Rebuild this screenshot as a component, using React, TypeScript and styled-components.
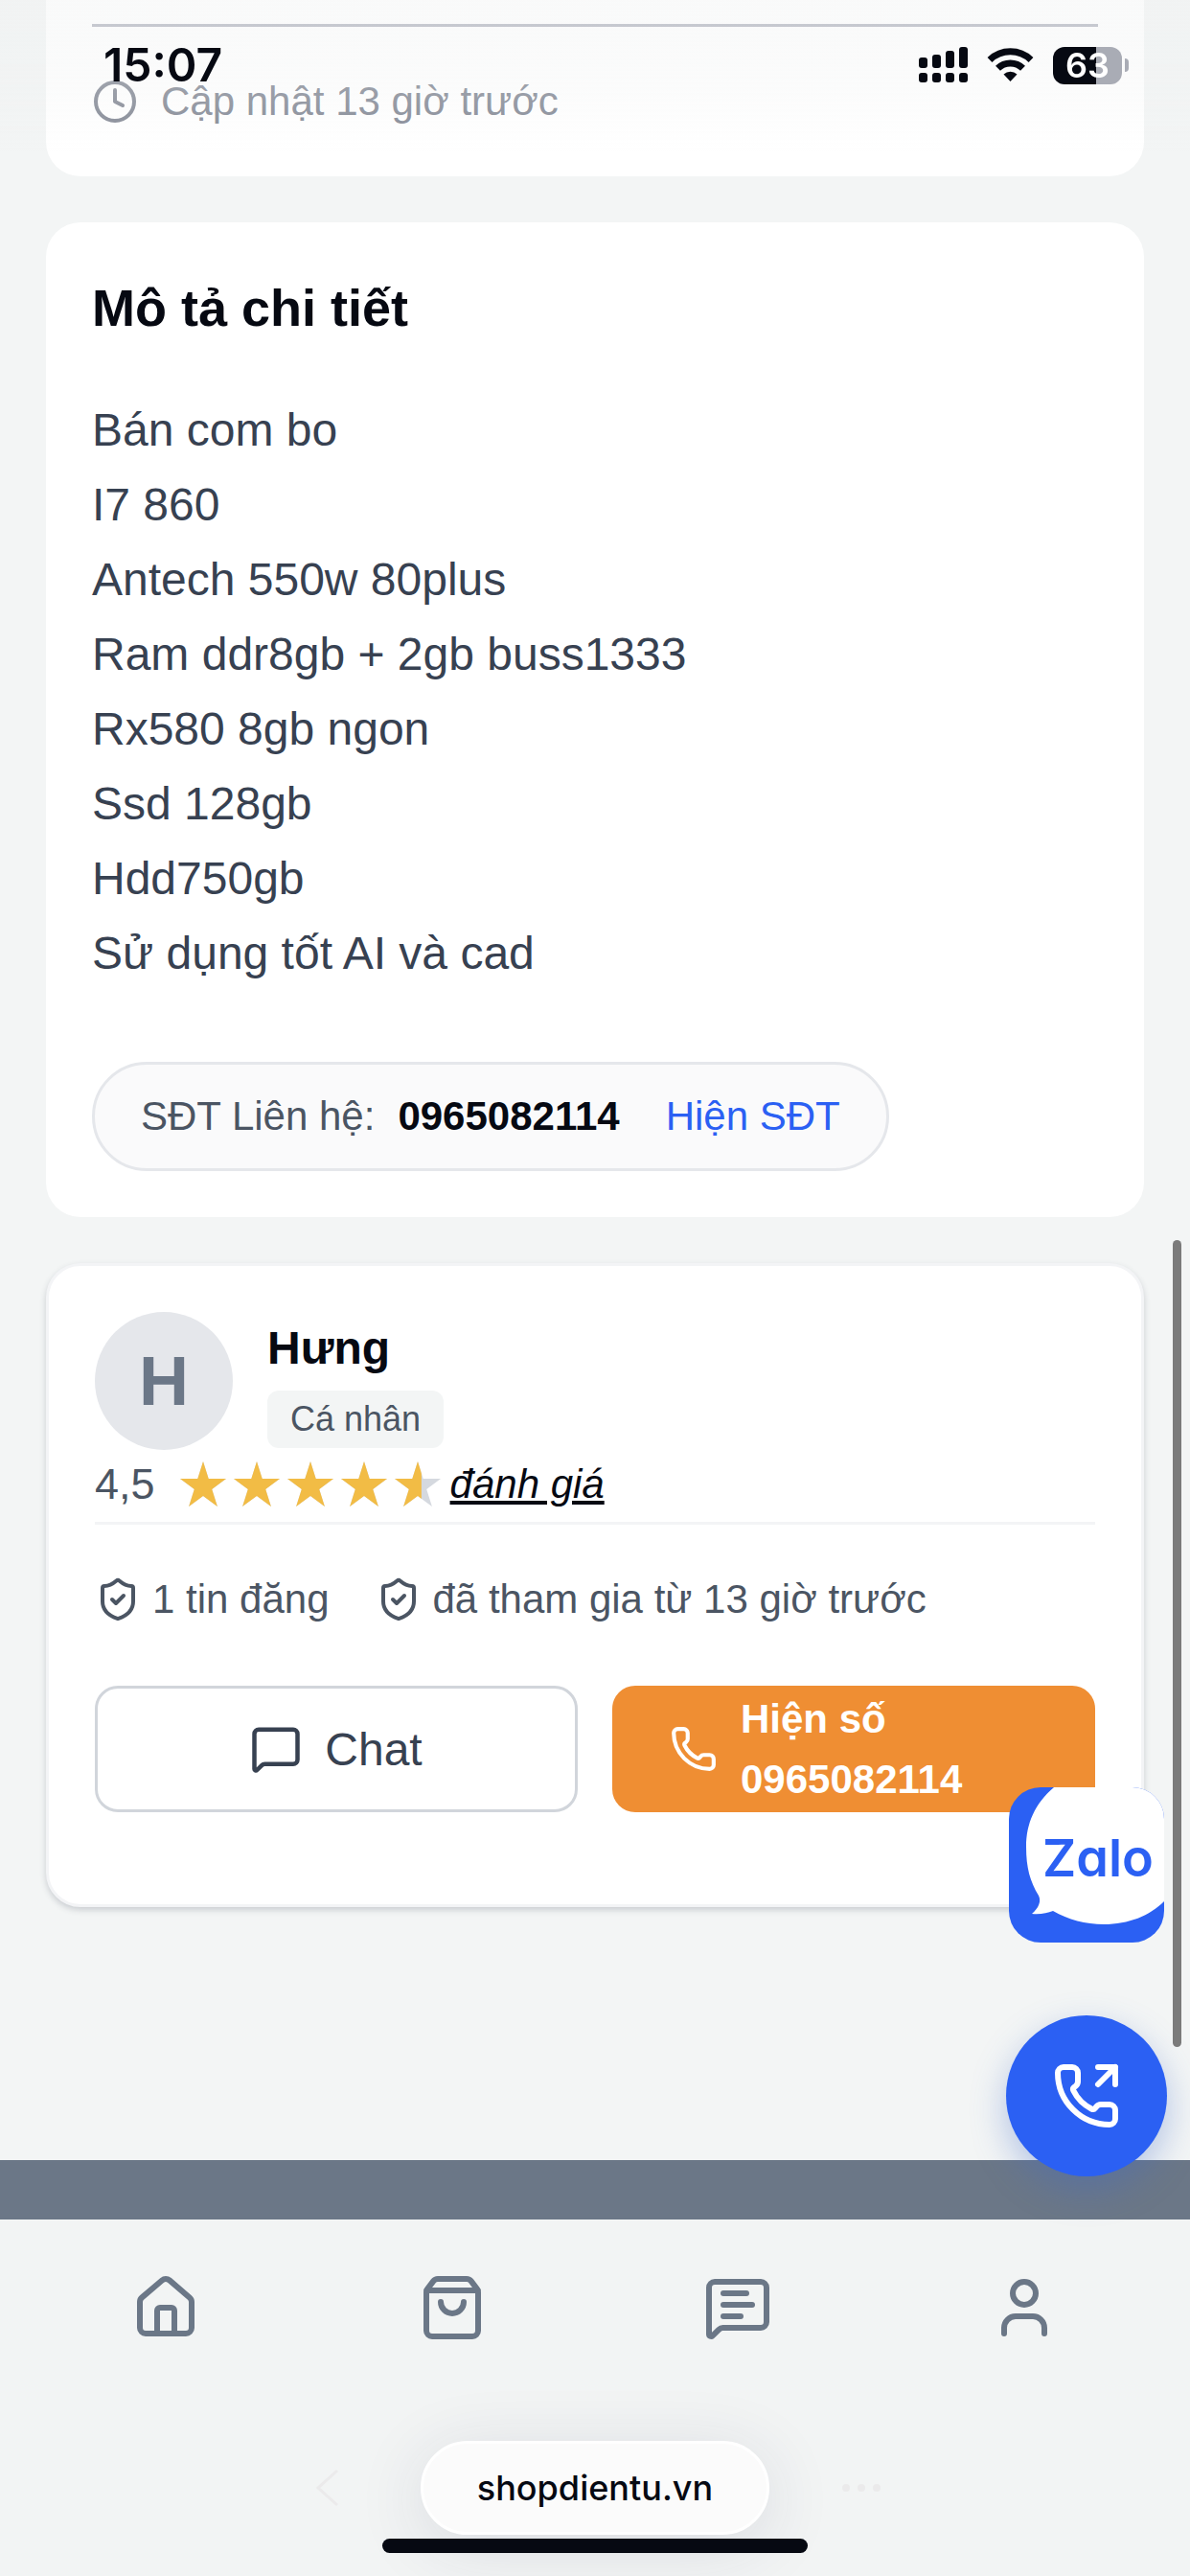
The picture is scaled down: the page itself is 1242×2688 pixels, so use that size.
import React from "react";
import styled, { createGlobalStyle } from "styled-components";
import {
  Clock,
  House,
  MessageSquare,
  MessageSquareText,
  Phone,
  PhoneOutgoing,
  ShieldCheck,
  ShoppingBag,
  User,
} from "lucide-react";

const sans = '"Liberation Sans", Arial, sans-serif';
const system = 'Inter, "Liberation Sans", sans-serif';

const color = {
  ink: "#060912",
  slate: "#374151",
  muted: "#4b5563",
  icon: "#6b7787",
  page: "#f3f5f5",
  line: "#e5e7eb",
  blue: "#2b60f3",
  orange: "#ef8e33",
  star: "#f2bc45",
};

const GlobalStyle = createGlobalStyle`
  *, *::before, *::after { box-sizing: border-box; }
  body { margin: 0; background: ${color.page}; font-family: ${sans}; color: ${color.ink}; }
  h1, h2, p { margin: 0; }
  button { font: inherit; padding: 0; border: 0; background: none; cursor: pointer; }
  a { color: inherit; }
  svg { display: block; flex: none; }
`;

const Page = styled.div`
  min-height: 100vh;
  display: flex;
  flex-direction: column;
`;

const Content = styled.main`
  flex: 1;
  display: flex;
  flex-direction: column;
  gap: 48px;
  padding: 0 48px;
`;

const Card = styled.section`
  background: #fff;
  border-radius: 36px;
  padding: 48px;
`;

const SummaryCard = styled(Card)`
  padding-top: 25px;
  border-radius: 0 0 36px 36px;
`;

const SellerCard = styled(Card)`
  border: 3px solid #f3f4f6;
  padding-bottom: 96px;
  box-shadow: 0 3px 6px rgba(55, 65, 81, 0.22);
`;

const Updated = styled.div`
  display: flex;
  align-items: center;
  gap: 24px;
  padding-top: 48px;
  border-top: 3px solid #b3b7c0;
  font-size: 42px;
  line-height: 60px;
  color: #858a96;
`;

const Title = styled.h1`
  margin-bottom: 48px;
  font-size: 54px;
  line-height: 82px;
`;

const Description = styled.p`
  margin-bottom: 74px;
  font-size: 48px;
  line-height: 78px;
  color: ${color.slate};
  white-space: pre-line;
`;

const PhonePill = styled.div`
  display: inline-flex;
  align-items: center;
  gap: 24px;
  height: 114px;
  padding: 0 48px;
  border: 3px solid ${color.line};
  border-radius: 57px;
  background: #fafafb;
  font-size: 42px;
  line-height: 60px;
  color: ${color.muted};
  vertical-align: top;

  strong { color: ${color.ink}; }
`;

const RevealButton = styled.button`
  margin-left: 24px;
  color: ${color.blue};
`;

const SellerHead = styled.div`
  display: flex;
  align-items: center;
  gap: 36px;
`;

const Avatar = styled.div`
  display: grid;
  place-items: center;
  width: 144px;
  height: 144px;
  border-radius: 50%;
  background: ${color.line};
  color: ${color.icon};
  font-size: 72px;
  font-weight: 700;
`;

const SellerInfo = styled.div`
  display: flex;
  flex-direction: column;
  align-items: flex-start;
  gap: 8px;
`;

const SellerName = styled.h2`
  font-size: 48px;
  line-height: 72px;
`;

const Chip = styled.span`
  padding: 0 24px;
  border-radius: 12px;
  background: ${color.page};
  font-size: 36px;
  line-height: 60px;
  color: ${color.muted};
`;

const Rating = styled.div`
  display: flex;
  align-items: center;
  gap: 8px;
  padding-bottom: 3px;
  border-bottom: 3px solid #f3f4f6;
  line-height: 72px;
`;

const Score = styled.span`
  margin-right: 18px;
  font-size: 45px;
  color: ${color.muted};
`;

const ReviewLink = styled.a`
  margin-left: 2px;
  font-size: 42px;
  font-style: italic;
`;

const Stats = styled.div`
  display: flex;
  gap: 48px;
  padding: 48px 0 60px;
`;

const Stat = styled.div`
  display: flex;
  align-items: center;
  gap: 12px;
  font-size: 42px;
  line-height: 60px;
  color: ${color.muted};
`;

const Actions = styled.div`
  display: grid;
  grid-template-columns: 1fr 1fr;
  gap: 36px;
`;

const ActionButton = styled.button<{ $primary?: boolean }>`
  && {
    display: flex;
    align-items: center;
    justify-content: ${(p) => (p.$primary ? "flex-start" : "center")};
    gap: 24px;
    height: 132px;
    padding: 0 ${(p) => (p.$primary ? "60px" : "24px")};
    border: ${(p) => (p.$primary ? "0" : "3px solid #d1d5db")};
    border-radius: 24px;
    background: ${(p) => (p.$primary ? color.orange : "#fff")};
    color: ${(p) => (p.$primary ? "#fff" : color.slate)};
    font-size: ${(p) => (p.$primary ? "42px" : "48px")};
    font-weight: ${(p) => (p.$primary ? 700 : 400)};
    line-height: 63px;
    text-align: left;
  }
`;

const FooterBand = styled.footer`
  height: 62px;
  background: ${color.icon};
`;

const BottomArea = styled.div`
  display: flex;
  flex-direction: column;
  align-items: center;
  padding-bottom: 24px;
  background: #f2f4f4;
  overflow: hidden;
`;

const NavBar = styled.nav`
  align-self: stretch;
  display: grid;
  grid-template-columns: repeat(4, 1fr);
  justify-items: center;
  padding: 56px 24px 103px;
`;

const NavLink = styled.a`
  color: ${color.icon};
`;

const BrowserBar = styled.div`
  display: flex;
  align-items: center;
  gap: 72px;
  margin-bottom: 4px;
  color: #ebeaeb;
`;

const AddressButton = styled.button`
  && {
    height: 98px;
    padding: 0 56px;
    border: 3px solid #fff;
    border-radius: 49px;
    background: #fbfbfb;
    box-shadow: 0 12px 72px rgba(40, 40, 80, 0.12);
    color: ${color.ink};
    font-family: ${system};
    font-size: 36px;
    font-weight: 500;
  }
`;

const HomeIndicator = styled.div`
  position: relative;
  width: 444px;
  height: 15px;
  border-radius: 8px;
  background: ${color.ink};
`;

const StatusBar = styled.header`
  position: fixed;
  inset: 0 0 auto 0;
  display: flex;
  justify-content: space-between;
  align-items: flex-start;
  height: 160px;
  padding: 38px 64px 0 108px;
  background: linear-gradient(rgba(238, 240, 240, 0.34) 0, rgba(238, 240, 240, 0.26) 50%, rgba(255, 255, 255, 0) 100%);
  font-family: ${system};
  pointer-events: none;
`;

const Time = styled.span`
  font-size: 48px;
  font-weight: 600;
  line-height: 60px;
`;

const StatusIcons = styled.div`
  display: flex;
  align-items: center;
  gap: 20px;
  height: 60px;
`;

const Battery = styled.div`
  display: flex;
  align-items: center;
  gap: 3px;
`;

const BatteryBody = styled.div`
  width: 72px;
  height: 39px;
  border-radius: 12px;
  background: linear-gradient(90deg, ${color.ink} 63%, #a9acb5 63%);
  color: #fff;
  font-size: 36px;
  font-weight: 600;
  line-height: 39px;
  text-align: center;
`;

const BatteryNub = styled.div`
  width: 4px;
  height: 14px;
  border-radius: 0 4px 4px 0;
  background: #a9acb5;
`;

const Floating = styled.aside`
  position: fixed;
  right: 24px;
  bottom: 417px;
  display: flex;
  flex-direction: column;
  align-items: center;
  gap: 76px;
`;

const ZaloLink = styled.a`
  display: block;
  width: 162px;
  height: 162px;
  border-radius: 33px;
  overflow: hidden;
`;

const ZaloWord = styled.text`
  font-family: ${system};
  font-size: 54px;
  font-weight: 600;
  font-feature-settings: "cv11", "ss03";
  fill: ${color.blue};
`;

const CallButton = styled.button`
  && {
    display: grid;
    place-items: center;
    width: 168px;
    height: 168px;
    border-radius: 50%;
    background: ${color.blue};
    color: #fff;
    box-shadow: 0 14px 36px rgba(60, 105, 200, 0.36);
  }
`;

const ScrollThumb = styled.div`
  position: fixed;
  top: 1294px;
  right: 9px;
  width: 9px;
  height: 842px;
  border-radius: 5px;
  background: #7b7b7b;
`;

const starPath =
  "M24 0 L29.7 18 H48 L33.2 29 L38.9 47 L24 36 L9.1 47 L14.8 29 L0 18 H18.3 Z";

function Star({ fill }: { fill: number }) {
  const id = `star-${Math.round(fill * 100)}`;
  return (
    <svg width="48" height="48" viewBox="0 0 48 48" aria-hidden="true">
      <clipPath id={id}>
        <rect width={48 * fill} height="48" />
      </clipPath>
      <path d={starPath} fill="#d5d9df" />
      <path d={starPath} fill={color.star} clipPath={`url(#${id})`} />
    </svg>
  );
}

function SignalIcon() {
  const tops = [11, 8, 4, 0];
  return (
    <svg width="51" height="38" viewBox="0 0 51 38" fill={color.ink} aria-hidden="true">
      {tops.map((top, i) => (
        <React.Fragment key={top}>
          <rect x={i * 14} y={top} width="9" height={22 - top} rx="3" />
          <rect x={i * 14} y="27" width="9" height="10" rx="3" />
        </React.Fragment>
      ))}
    </svg>
  );
}

function WifiIcon() {
  return (
    <svg width="49" height="38" viewBox="0 0 49 38" aria-hidden="true">
      <g fill="none" stroke={color.ink} strokeWidth="7">
        <path d="M3 13.5 A31 31 0 0 1 46 13.5" />
        <path d="M11.5 22.3 A18.5 18.5 0 0 1 37.5 22.3" />
      </g>
      <path d="M17.5 28.5 A10.5 10.5 0 0 1 31.5 28.5 L24.5 36 Z" fill={color.ink} />
    </svg>
  );
}

function ZaloLogo() {
  return (
    <svg width="162" height="162" viewBox="0 0 162 162" aria-hidden="true">
      <rect width="162" height="162" fill={color.blue} />
      <path
        d="M47 0 C27 17 18 38 18 62 C18 84 22 98 31 113 C34 119 31 126 24 132 C33 133 40 131 46 129 C62 138 80 143 99 143 C125 143 147 134 162 119 V0 Z"
        fill="#fff"
      />
      <ZaloWord x="35" y="93">Zalo</ZaloWord>
    </svg>
  );
}

const description = [
  "Bán com bo",
  "I7 860",
  "Antech 550w 80plus",
  "Ram ddr8gb + 2gb buss1333",
  "Rx580 8gb ngon",
  "Ssd 128gb",
  "Hdd750gb",
  "Sử dụng tốt AI và cad",
].join("\n");

const stars = [1, 1, 1, 1, 0.58];
const stats = ["1 tin đăng", "đã tham gia từ 13 giờ trước"];
const navItems = [
  { label: "Trang chủ", Icon: House },
  { label: "Mua sắm", Icon: ShoppingBag },
  { label: "Tin nhắn", Icon: MessageSquareText },
  { label: "Tài khoản", Icon: User },
];

export default function App() {
  return (
    <>
      <GlobalStyle />
      <Page>
        <Content>
          <SummaryCard>
            <Updated>
              <Clock size={48} />
              <span>Cập nhật 13 giờ trước</span>
            </Updated>
          </SummaryCard>

          <Card>
            <Title>Mô tả chi tiết</Title>
            <Description>{description}</Description>
            <PhonePill>
              <span>SĐT Liên hệ:</span>
              <strong>0965082114</strong>
              <RevealButton type="button">Hiện SĐT</RevealButton>
            </PhonePill>
          </Card>

          <SellerCard>
            <SellerHead>
              <Avatar>H</Avatar>
              <SellerInfo>
                <SellerName>Hưng</SellerName>
                <Chip>Cá nhân</Chip>
              </SellerInfo>
            </SellerHead>
            <Rating>
              <Score>4,5</Score>
              {stars.map((fill, i) => (
                <Star key={i} fill={fill} />
              ))}
              <ReviewLink href="#reviews">đánh giá</ReviewLink>
            </Rating>
            <Stats>
              {stats.map((text) => (
                <Stat key={text}>
                  <ShieldCheck size={48} />
                  <span>{text}</span>
                </Stat>
              ))}
            </Stats>
            <Actions>
              <ActionButton type="button">
                <MessageSquare size={54} />
                <span>Chat</span>
              </ActionButton>
              <ActionButton type="button" $primary>
                <Phone size={50} />
                <span>Hiện số 0965082114</span>
              </ActionButton>
            </Actions>
          </SellerCard>
        </Content>

        <FooterBand />
        <BottomArea>
          <NavBar>
            {navItems.map(({ label, Icon }) => (
              <NavLink key={label} href="#" aria-label={label}>
                <Icon size={72} />
              </NavLink>
            ))}
          </NavBar>
          <BrowserBar>
            <svg width="48" height="48" viewBox="0 0 48 48" fill="none" stroke="currentColor" strokeWidth="3" aria-hidden="true">
              <path d="M33 6 L13 24 L33 42" />
            </svg>
            <AddressButton type="button">shopdientu.vn</AddressButton>
            <svg width="48" height="48" viewBox="0 0 48 48" fill="currentColor" aria-hidden="true">
              <circle cx="8" cy="24" r="4" />
              <circle cx="24" cy="24" r="4" />
              <circle cx="40" cy="24" r="4" />
            </svg>
          </BrowserBar>
          <HomeIndicator />
        </BottomArea>
      </Page>

      <StatusBar>
        <Time>15:07</Time>
        <StatusIcons>
          <SignalIcon />
          <WifiIcon />
          <Battery>
            <BatteryBody>63</BatteryBody>
            <BatteryNub />
          </Battery>
        </StatusIcons>
      </StatusBar>

      <Floating>
        <ZaloLink href="#zalo" aria-label="Zalo">
          <ZaloLogo />
        </ZaloLink>
        <CallButton type="button" aria-label="Gọi điện">
          <PhoneOutgoing size={72} />
        </CallButton>
      </Floating>
      <ScrollThumb />
    </>
  );
}
